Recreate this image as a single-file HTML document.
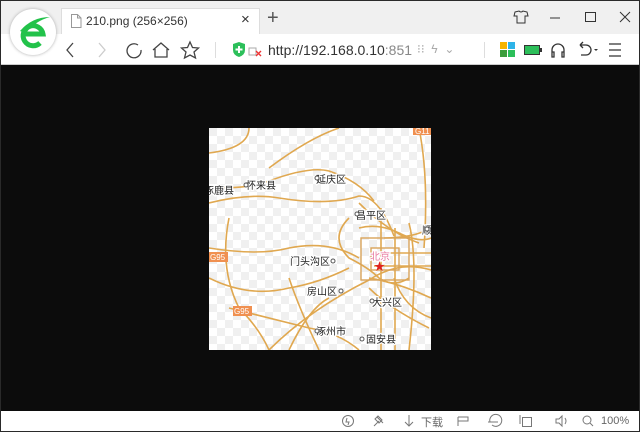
<!DOCTYPE html>
<html><head><meta charset="utf-8"><style>
*{margin:0;padding:0;box-sizing:border-box}
body{width:640px;height:432px;overflow:hidden;background:#0c0c0c;font-family:"Liberation Sans","Noto Sans CJK SC",sans-serif;position:relative}
#frame{position:absolute;left:0;top:0;width:640px;height:432px;border:1px solid #2a2a2a}
.tabs{position:absolute;left:1px;top:1px;width:638px;height:33px;background:#f0f0f0}
.tab{position:absolute;left:61px;top:8px;width:199px;height:26px;background:#fff;border:1px solid #ddd;border-bottom:none}
.tb{position:absolute;left:1px;top:34px;width:638px;height:31px;background:#fff;border-bottom:1px solid #ccc}
.sb{position:absolute;left:1px;top:411px;width:638px;height:20px;background:#fff;font-size:11px;color:#666}
.t{position:absolute;white-space:nowrap}
svg{position:absolute}
</style></head><body>
<div id="frame"></div>
<div class="tabs"></div>
<div class="tab"></div>
<div class="t" style="left:86px;top:14px;font-size:12px;color:#333">210.png (256×256)</div>
<svg style="left:70px;top:14px" width="12" height="14"><path d="M1.5 .5h6l3.5 3.5v9.5h-9.5z M7.5 .5v3.5h3.5" fill="none" stroke="#999"/></svg>
<div class="t" style="left:241px;top:11px;font-size:15px;color:#333">×</div>
<div class="t" style="left:267px;top:7px;font-size:20px;color:#555;font-weight:300">+</div>
<svg style="left:512px;top:10px" width="120" height="16" fill="none" stroke="#333">
<path d="M3 2l4-1q2 2 4 0l4 1 1 4-3 0v7h-8v-7l-3 0z"/>
<path d="M38 8h10"/><rect x="73.5" y="2.5" width="10" height="9"/><path d="M108 2l10 10M118 2l-10 10"/></svg>
<div class="tb"></div>
<svg style="left:62px;top:40px" width="150" height="20" fill="none" stroke="#444" stroke-width="1.3">
<path d="M11 3l-6 7 6 7"/><path d="M37 3l6 7-6 7" stroke="#ccc"/>
<path d="M76 5a7 7 0 1 0 3 5"/><path d="M91 10l8-7 8 7M93 9v8h12v-8"/>
<path d="M128 2l2.5 5.5 6 .5-4.5 4 1.5 6-5.5-3-5.5 3 1.5-6-4.5-4 6-.5z"/></svg>
<div style="position:absolute;left:215px;top:42px;width:1px;height:16px;background:#ddd"></div>
<svg style="left:232px;top:42px" width="36" height="16"><path d="M1 2l6-2 6 2v6q0 5-6 7q-6-2-6-7z" fill="#2cbf5a"/><path d="M7 4v7M3.5 7.5h7" stroke="#fff" stroke-width="2"/><rect x="17" y="6" width="7" height="7" fill="none" stroke="#aaa"/><path d="M24 9l5 5M29 9l-5 5" stroke="#e33" stroke-width="1.4"/></svg>
<div class="t" style="left:268px;top:42px;font-size:14px;color:#333">http://192.168.0.10<span style="color:#888">:851</span></div>
<div class="t" style="left:417px;top:42px;font-size:12px;color:#aaa">⁝⁝ &nbsp;ϟ &nbsp;⌄</div>
<div style="position:absolute;left:484px;top:42px;width:1px;height:16px;background:#ddd"></div>
<svg style="left:498px;top:40px" width="140" height="20">
<rect x="2" y="2" width="7" height="7" fill="#f6b400"/><rect x="10" y="2" width="7" height="7" fill="#2db3e8"/><rect x="2" y="10" width="7" height="7" fill="#3c9d3c"/><rect x="10" y="10" width="7" height="7" fill="#2cbf5a"/>
<rect x="26.5" y="5.5" width="15" height="9" fill="#2cbf5a" stroke="#333"/><rect x="42" y="8" width="2" height="4" fill="#333"/>
<path d="M54 16v-6a6 6 0 0 1 12 0v6M54 12h2v5h-2zM64 12h2v5h-2z" fill="none" stroke="#333" stroke-width="1.3"/>
<path d="M82 5h6a5 5 0 0 1 0 10h-5M82 5l3-3M82 5l3 3" fill="none" stroke="#333" stroke-width="1.3"/><path d="M96 9h4l-2 2z" fill="#333"/>
<path d="M111 4h12M111 10h12M111 16h12" stroke="#333" stroke-width="1.2"/></svg>
<!-- logo -->
<div style="position:absolute;left:10px;top:9px;width:46px;height:46px;border-radius:50%;background:#fff;box-shadow:0 0 3px #aaa"></div>
<svg style="left:10px;top:9px" width="46" height="46"><path d="M14 25h19a10 10 0 1 0-3 9" fill="none" stroke="#22c24a" stroke-width="5"/><path d="M10 22q12-14 30-14q-15 4-24 16" fill="#22c24a"/></svg>
<!-- map -->
<svg style="left:209px;top:128px" width="222" height="222" viewBox="0 0 222 222">
<defs><pattern id="c" width="16" height="16" patternUnits="userSpaceOnUse"><rect width="16" height="16" fill="#fff"/><rect width="8" height="8" fill="#f0f0f0"/><rect x="8" y="8" width="8" height="8" fill="#f0f0f0"/></pattern></defs>
<rect width="222" height="222" fill="url(#c)"/>
<g fill="none" stroke="#e0a850" stroke-width="1.6">
<path d="M0 25q40-5 40-25"/><path d="M0 58q30 5 60-5q40-15 60-10q30 10 45 30"/><path d="M0 75q40-10 70-5q50 8 80-2q20 0 35 40"/>
<path d="M150 75q30 30 60 40"/><path d="M140 90q-20 20-0 40q20 10 30 20q15 10 30 0"/><path d="M0 120q50 8 80 0q40-8 70 10"/>
<path d="M0 150q40 20 80 10q30-5 60-20"/><path d="M20 180q40 10 80 20q30 5 50 22"/><path d="M60 222q40-40 100-70q30-20 62-10"/>
<path d="M165 125h57M165 138h57M160 150q30 5 62 20"/><path d="M172 80v142M186 100v122M200 95q10 40 0 127"/>
<path d="M150 100q20-5 40 5q20 10 32 5"/><path d="M160 160q20 20 60 40"/><path d="M80 150q10 30 30 72"/>
<path d="M210 0q10 50 5 120"/><path d="M20 90q-10 50 10 90q20 20 30 42"/><path d="M120 170q-20 10-40 52"/>
<path d="M130 0q-30 10-70 40"/><path d="M175 110q30 0 47-10"/><path d="M185 150q10 30 37 40"/>
</g>
<g stroke="#d9a45a" stroke-width="1.4" fill="none"><rect x="162" y="120" width="28" height="22"/><rect x="152" y="110" width="48" height="42"/></g>
<g font-size="10" fill="#222" stroke="#fff" stroke-width="2.5" paint-order="stroke" font-family="Noto Sans CJK SC,sans-serif">
<text x="107" y="55">延庆区</text><text x="37" y="61">怀来县</text><text x="-5" y="66">涿鹿县</text><text x="147" y="91">昌平区</text>
<text x="213" y="106">顺</text><text x="81" y="137">门头沟区</text><text x="98" y="167">房山区</text><text x="163" y="178">大兴区</text>
<text x="107" y="207">涿州市</text><text x="157" y="215">固安县</text><text x="161" y="132" fill="#e87aa0">北京</text></g>
<g fill="#fff" stroke="#555"><circle cx="108" cy="50" r="2"/><circle cx="37" cy="57" r="2"/><circle cx="148" cy="86" r="2"/><circle cx="218" cy="101" r="2"/><circle cx="124" cy="133" r="2"/><circle cx="132" cy="163" r="2"/><circle cx="163" cy="173" r="2"/><circle cx="108" cy="203" r="2"/><circle cx="153" cy="211" r="2"/></g>
<text x="165" y="142" font-size="11" fill="#e02020">★</text>
<g font-size="8" fill="#fff"><rect x="0" y="124" width="19" height="10" fill="#f09050"/><text x="1" y="132">G95</text><rect x="24" y="178" width="19" height="10" fill="#f09050"/><text x="25" y="186">G95</text><rect x="204" y="0" width="18" height="7" fill="#f09050"/><text x="206" y="6">G11</text></g>
</svg>
<div class="sb"></div>
<svg style="left:340px;top:413px" width="300" height="16" fill="none" stroke="#777">
<circle cx="8" cy="8" r="5.5"/><path d="M7 5l-1 4h3l-1 3"/>
<path d="M34 13l5-5M37 4l6 6M38 3l4 4-3 3-4-4z"/>
<path d="M69 2v11M65 9l4 4 4-4"/>
<path d="M118 4v9M118 4h10v4h-10"/>
<path d="M150 9a6 6 0 1 1 2 3M148 9h10"/>
<rect x="182.5" y="4.5" width="9" height="9"/><path d="M180 2v9"/>
<path d="M216 6h3l3-3v10l-3-3h-3z M225 5q2 3 0 6"/>
<circle cx="247" cy="7" r="4"/><path d="M250 10l3 3"/></svg>
<div class="t" style="left:421px;top:414px;font-size:11px;color:#666">下载</div>
<div class="t" style="left:601px;top:415px;font-size:11px;color:#666">100%</div>
</body></html>
